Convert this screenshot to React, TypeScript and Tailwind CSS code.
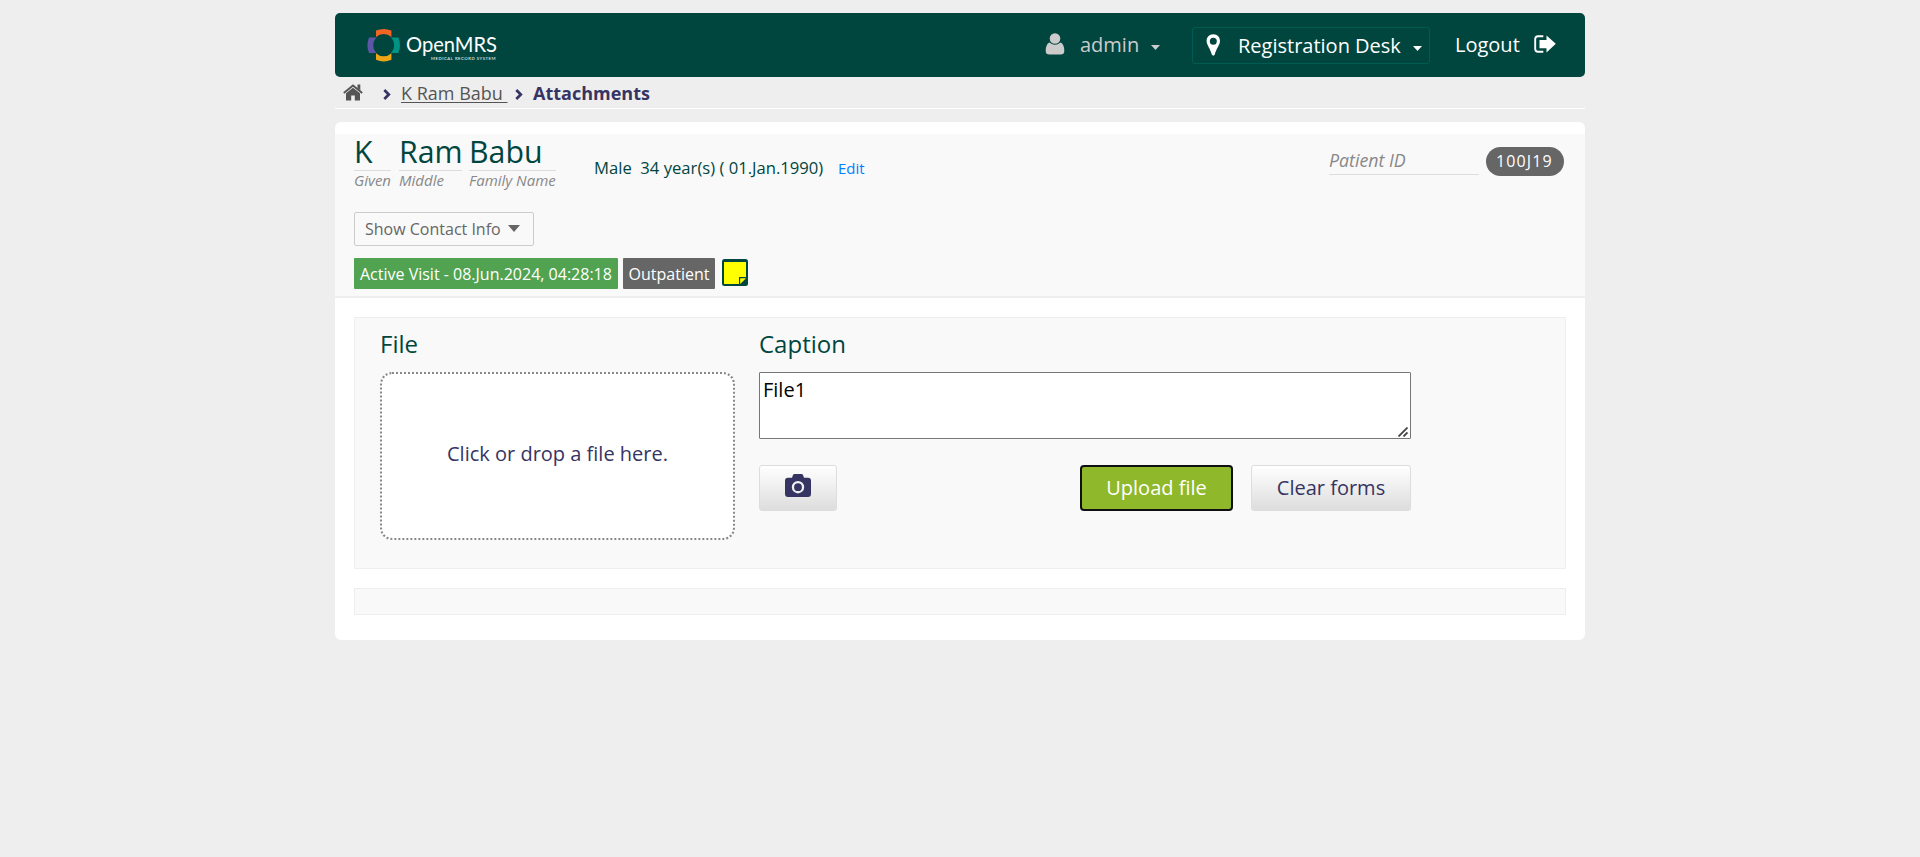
import React from "react";

function Logo() {
  return (
    <svg className="block h-[36px] w-[134px]" viewBox="0 0 134 36">
      <path d="M9 3.6 Q16.7 .2 24.4 3.6 V10.1 A11.2 11.2 0 0 0 9 10.1 Z" fill="#f26522" />
      <path d="M9 32.8 Q16.7 36.2 24.4 32.8 V26.3 A11.2 11.2 0 0 1 9 26.3 Z" fill="#eea616" />
      <path d="M2 10.4 Q-1.2 18.2 2 26 H9.5 A11 11 0 0 1 9.5 10.4 Z" fill="#5b57a6" />
      <path d="M31.4 10.4 Q34.6 18.2 31.4 26 H23.9 A11 11 0 0 0 23.9 10.4 Z" fill="#009384" />
      <text x="39" y="25" textLength="91" lengthAdjust="spacingAndGlyphs" fill="#fff" fontFamily="Lato, sans-serif" fontSize="20.5">OpenMRS</text>
      <text x="64" y="32.8" textLength="64.5" fill="#fff" fontFamily="Lato, sans-serif" fontWeight="400" fontSize="4.3">MEDICAL RECORD SYSTEM</text>
    </svg>
  );
}

function Caret({ className }: { className: string }) {
  return (
    <svg className={className} viewBox="0 0 10 5" preserveAspectRatio="none">
      <path d="M0 0H10L5 5Z" fill="currentColor" />
    </svg>
  );
}

function Chevron() {
  return (
    <svg className="h-[11px] w-[8px] text-[#363463]" viewBox="0 0 8 11">
      <path d="M1.3 1L5.8 5.5L1.3 10" fill="none" stroke="currentColor" strokeWidth="2.7" />
    </svg>
  );
}

function Header() {
  return (
    <header className="flex h-16 items-center rounded-[5px] bg-[#00463f] pl-8 text-[20px] leading-[32px] text-white">
      <Logo />
      <div className="ml-auto flex w-[147px] items-center text-[#cccccc]">
        <svg className="-mt-[2px] h-[22px] w-[20px]" viewBox="0 0 19 22">
          <circle cx="9.5" cy="5.5" r="5.3" fill="currentColor" />
          <path d="M4 9.5Q9.5 14 15 9.5Q18.8 11 18.8 18Q18.8 21.5 15 21.5H4Q.2 21.5 .2 18Q.2 11 4 9.5Z" fill="currentColor" />
        </svg>
        <span className="ml-[15px] w-[60px]">admin</span>
        <Caret className="ml-[11px] mt-[5px] h-[5px] w-[9px]" />
      </div>
      <div className="flex h-[37px] w-[238px] items-center rounded-[3px] border border-[#005c53] pl-[13px]">
        <svg className="-mt-[1px] h-[22px] w-[15px]" viewBox="0 0 15 22">
          <path fillRule="evenodd" d="M7.3 .3C3 .3 .6 3.5 .6 7C.6 11 4.5 15 5.8 20.5Q7.3 22.8 8.8 20.5C10 15 14 11 14 7C14 3.5 11.6 .3 7.3 .3ZM7.3 3.8A3.5 3.5 0 1 1 7.3 10.8A3.5 3.5 0 1 1 7.3 3.8Z" fill="currentColor" />
        </svg>
        <span className="ml-[17px] mt-[2px] w-[163px] whitespace-nowrap">Registration Desk</span>
        <Caret className="ml-[12px] mt-[7px] h-[5px] w-[9px]" />
      </div>
      <div className="ml-[25px] mr-[29px] flex items-center">
        <span className="w-[66px]">Logout</span>
        <svg className="-mt-[3px] ml-[13px] h-[18px] w-[22px]" viewBox="0 0 22 18">
          <path d="M9.3 1.3H4Q1.2 1.3 1.2 4V14Q1.2 16.7 4 16.7H9.3" fill="none" stroke="currentColor" strokeWidth="1.9" />
          <path d="M5.5 4.9H12.5V.4L21.8 8.8L12.5 17.4V13.2H5.5Z" fill="currentColor" />
        </svg>
      </div>
    </header>
  );
}

function Breadcrumbs() {
  return (
    <nav className="flex h-8 items-center border-b border-white pl-[8px] text-[18px] leading-[30px] text-[#363463]">
      <svg className="-mt-px h-[17px] w-[20px] text-[#555555]" viewBox="0 0 20 17">
        <path d="M14.5 .6H17.3V6.5L14.5 4Z" fill="currentColor" />
        <path d="M.8 9L10 1.5L19.2 9" fill="none" stroke="currentColor" strokeWidth="1.9" />
        <path d="M3 9.3L10 3.7L17 9.3V16.5H11.8V11.5H8.2V16.5H3Z" fill="currentColor" />
      </svg>
      <span className="ml-[20px] mt-[3px]"><Chevron /></span>
      <a className="ml-[10px] w-[106px] whitespace-pre text-[#555555] underline underline-offset-[2px]">{"K Ram Babu "}</a>
      <span className="ml-[8px] mt-[3px]"><Chevron /></span>
      <span className="ml-[10px] whitespace-nowrap font-bold">Attachments</span>
    </nav>
  );
}

function NamePart({ name, label, className }: { name: string; label: string; className: string }) {
  return (
    <div className={className}>
      <div className="h-[37px] border-b border-[#dddddd] text-[30.3px] font-[370] leading-[36px]">{name}</div>
      <div className="-mt-px whitespace-nowrap text-[15px] italic leading-[21px] text-[#888888]">{label}</div>
    </div>
  );
}

function PatientHeader() {
  return (
    <section className="h-[164px] border-b-2 border-[#eeeeee] bg-[#f9f9f9] pl-[19px] text-[#00463f]">
      <div className="flex h-[78px]">
        <NamePart name="K" label="Given" className="w-[37px]" />
        <NamePart name="Ram" label="Middle" className="ml-[8px] w-[63px]" />
        <NamePart name="Babu" label="Family Name" className="ml-[7px] w-[87px]" />
        <div className="ml-[38px] mt-[21px] w-[230px] whitespace-pre text-[16.64px] leading-[25px]">{"Male  34 year(s) ( 01.Jan.1990)"}</div>
        <a className="ml-[14px] mt-[22px] text-[15px] leading-[25px] text-[#007fff]">Edit</a>
        <div className="ml-auto mt-[13px] h-[28px] w-[150px] border-b border-[#dddddd] text-[17.8px] italic leading-[26px] text-[#888888]">Patient ID</div>
        <div className="ml-[7px] mr-[21px] mt-[13px] h-[29px] w-[78px] rounded-full bg-[#666666] pl-[10px] text-[16px] leading-[28px] tracking-[1.1px] text-white">100J19</div>
      </div>
      <button className="flex h-[34px] w-[180px] items-center rounded-[2px] border border-[#cccccc] pl-[10px] text-[16px] text-[#666666]">
        <span className="w-[137px] whitespace-nowrap text-left">Show Contact Info</span>
        <Caret className="-mt-[2px] ml-[6px] h-[7px] w-[12px]" />
      </button>
      <div className="mt-[12px] flex text-[16px] leading-[32px] text-white">
        <span className="h-[31px] w-[264px] whitespace-nowrap rounded-[1px] bg-[#51a351] pl-[6px]">Active Visit - 08.Jun.2024, 04:28:18</span>
        <span className="ml-[5px] h-[31px] w-[92px] rounded-[1px] bg-[#666666] text-center">Outpatient</span>
        <svg className="ml-[7px] mt-[1px] h-[27px] w-[26px]" viewBox="0 0 26 27">
          <rect width="26" height="27" rx="2.5" fill="#00463f" />
          <path d="M2 3H24V18H17V25H2Z" fill="#ffff00" />
          <path d="M18.2 19.2H24L18.2 25Z" fill="#ffff00" />
        </svg>
      </div>
    </section>
  );
}

function UploadPanel() {
  return (
    <section className="mx-[19px] mt-[19px] flex h-[252px] border border-[#eeeeee] bg-[#f9f9f9] pl-[25px] text-[20px]">
      <div className="w-[355px]">
        <h3 className="mt-[10px] h-[44px] text-[24px] font-[370] leading-[32px] text-[#00463f]">File</h3>
        <div className="flex h-[168px] items-center justify-center rounded-[12px] border-2 border-dotted border-[#888888] bg-white pb-[4px] text-[#363463]">
          Click or drop a file here.
        </div>
      </div>
      <div className="ml-[24px] w-[652px]">
        <h3 className="mt-[10px] h-[44px] text-[24px] font-[370] leading-[32px] text-[#00463f]">Caption</h3>
        <div className="relative">
          <textarea
            className="block h-[67px] w-[652px] resize-none rounded-[1px] border border-[#767676] bg-white px-[3px] py-[2px] leading-[30px] text-black outline-none"
            defaultValue="File1"
          />
          <svg className="absolute bottom-[2px] right-[3px] h-[10px] w-[10px]" viewBox="0 0 10 10">
            <path d="M.5 9.5L9.5 .5M5.5 9.5L9.5 5.5" stroke="#444444" strokeWidth="1.8" />
          </svg>
        </div>
        <div className="mt-[26px] flex h-[46px]">
          <button className="flex w-[78px] items-center justify-center rounded-[3px] border border-[#dddddd] bg-linear-to-b from-white to-[#dddddd] pb-[6px]">
            <svg className="h-[23px] w-[26px]" viewBox="0 0 26 23">
              <path fillRule="evenodd" d="M3 3.7H7L8 1Q8.4 0 9.5 0H16.5Q17.6 0 18 1L19 3.7H23Q26 3.7 26 6.7V20Q26 23 23 23H3Q0 23 0 20V6.7Q0 3.7 3 3.7ZM13 7A6.2 6.2 0 1 0 13 19.4A6.2 6.2 0 1 0 13 7ZM13 9.3A3.9 3.9 0 1 1 13 17.1A3.9 3.9 0 1 1 13 9.3Z" fill="#363463" />
            </svg>
          </button>
          <button className="ml-auto w-[153px] whitespace-nowrap rounded-[4px] border-2 border-[#101010] bg-[#8fb82a] leading-[40px] text-white">Upload file</button>
          <button className="ml-[18px] w-[160px] whitespace-nowrap rounded-[3px] border border-[#dddddd] bg-linear-to-b from-white to-[#dddddd] leading-[42px] text-[#363463]">Clear forms</button>
        </div>
      </div>
    </section>
  );
}

export default function App() {
  return (
    <div className="min-h-screen bg-[#eeeeee] pt-[13px] font-['Open_Sans',sans-serif]">
      <div className="mx-auto w-[1250px]">
        <Header />
        <Breadcrumbs />
        <main className="mt-[13px] h-[518px] rounded-[6px] bg-white pt-[12px]">
          <PatientHeader />
          <UploadPanel />
          <section className="mx-[19px] mt-[19px] h-[27px] border border-[#eeeeee] bg-[#f9f9f9]" />
        </main>
      </div>
    </div>
  );
}
